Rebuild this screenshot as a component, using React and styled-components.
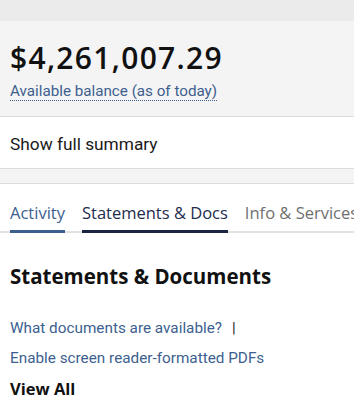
import styled, { createGlobalStyle } from 'styled-components';

const GlobalStyle = createGlobalStyle`
	body {
		margin: 0;
		background: #ffffff;
		font-family: 'Roboto', 'Liberation Sans', sans-serif;
	}
`;

const tabs = [
	{ label: 'Activity', tone: 'link' },
	{ label: 'Statements & Docs', tone: 'active' },
	{ label: 'Info & Services', tone: 'muted' },
];

function App() {
	return (
		<Page>
			<GlobalStyle />
			<TopBand />
			<Balance>
				<Amount>$4,261,007.29</Amount>
				<BalanceLabel>Available balance (as of today)</BalanceLabel>
			</Balance>
			<SummaryRow>Show full summary</SummaryRow>
			<Gap />
			<Tabs>
				{tabs.map((t) => (
					<Tab key={t.label} tone={t.tone}>
						{t.label}
					</Tab>
				))}
			</Tabs>
			<Content>
				<Heading>Statements &amp; Documents</Heading>
				<Links>
					<LinkRow>
						<Link>What documents are available?</Link>
						<Divider>|</Divider>
					</LinkRow>
					<Link>Enable screen reader-formatted PDFs</Link>
				</Links>
				<ViewAll>View All</ViewAll>
			</Content>
		</Page>
	);
}

const Page = styled.div`
	width: 354px;
	height: 405px;
	overflow: hidden;
	display: flex;
	flex-direction: column;
	background: #fff;
`;

const TopBand = styled.div`
	height: 21px;
	flex-shrink: 0;
	background: #ebebeb;
`;

const Balance = styled.div`
	flex-shrink: 0;
	height: 96px;
	box-sizing: border-box;
	padding: 19px 10px 0;
	background: #f4f4f4;
	border-bottom: 1px solid #dcdcdc;
	display: flex;
	flex-direction: column;
`;

const Amount = styled.div`
	font-family: 'Open Sans', 'Noto Sans', sans-serif;
	font-size: 30px;
	font-weight: 600;
	line-height: 36px;
	color: #111;
	letter-spacing: 1.3px;
`;

const BalanceLabel = styled.span`
	align-self: flex-start;
	margin-top: 6px;
	font-size: 15.2px;
	line-height: 18px;
	color: #3d5f8f;
	border-bottom: 1px dotted #3d5f8f;
`;

const SummaryRow = styled.div`
	flex-shrink: 0;
	height: 52px;
	box-sizing: border-box;
	padding: 2px 10px 0;
	display: flex;
	align-items: center;
	font-size: 17.3px;
	color: #1a1a1a;
	background: #fff;
	border-bottom: 1px solid #dcdcdc;
`;

const Gap = styled.div`
	flex-shrink: 0;
	height: 14px;
	background: #f4f4f4;
	border-bottom: 1px solid #dcdcdc;
`;

const Tabs = styled.div`
	flex-shrink: 0;
	height: 49px;
	box-sizing: border-box;
	padding: 0 10px;
	display: flex;
	gap: 17px;
	white-space: nowrap;
	border-bottom: 2px solid #e2e2e2;
`;

const toneColor = {
	link: '#3d5f8f',
	active: '#1f2d4f',
	muted: '#6f6f6f',
};

const Tab = styled.div`
	font-family: 'Open Sans', 'Noto Sans', sans-serif;
	font-size: 16.5px;
	color: ${({ tone }) => toneColor[tone]};
	display: flex;
	align-items: center;
	padding-top: 10px;
	margin-bottom: -2px;
	border-bottom: 3px solid
		${({ tone }) =>
			tone === 'link' ? '#3d5f8f' : tone === 'active' ? '#1b2440' : 'transparent'};
	box-sizing: border-box;
`;

const Content = styled.div`
	padding: 29px 10px 0;
	display: flex;
	flex-direction: column;
`;

const Heading = styled.h2`
	margin: 0;
	font-family: 'Open Sans', 'Noto Sans', sans-serif;
	font-weight: 700;
	font-size: 20.5px;
	line-height: 28px;
	color: #111;
`;

const Links = styled.div`
	margin-top: 29px;
	display: flex;
	flex-direction: column;
	gap: 12px;
`;

const LinkRow = styled.div`
	display: flex;
	align-items: center;
	gap: 10px;
`;

const Link = styled.span`
	font-size: 15.3px;
	line-height: 18px;
	color: #3d5f8f;
`;

const Divider = styled.span`
	font-size: 15px;
	line-height: 18px;
	color: #222;
`;

const ViewAll = styled.div`
	margin-top: 10px;
	font-family: 'Open Sans', 'Noto Sans', sans-serif;
	font-weight: 700;
	font-size: 16.5px;
	color: #111;
`;

export default App;
